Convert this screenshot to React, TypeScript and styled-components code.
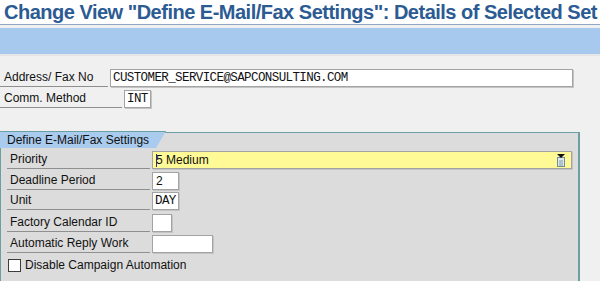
import React from 'react';
import styled, { createGlobalStyle } from 'styled-components';

const GlobalStyle = createGlobalStyle`
  body {
    margin: 0;
    background: #f0f0f0;
    font-family: 'Liberation Sans', Arial, sans-serif;
    overflow: hidden;
  }
`;

const Page = styled.div`
  width: 600px;
  height: 281px;
  background: #f0f0f0;
  overflow: hidden;
`;

const TitleBar = styled.div`
  height: 25px;
  background: #ffffff;
  border-bottom: 1px solid #8ea8c6;
  padding-left: 4px;
  box-sizing: border-box;
  white-space: nowrap;
  overflow: hidden;
`;

const Title = styled.h1`
  margin: 0;
  font-size: 20px;
  line-height: 24px;
  font-weight: bold;
  color: #2c5b93;
  letter-spacing: -0.5px;
`;

const Toolbar = styled.div`
  height: 26px;
  margin-top: 3px;
  background: #a7c9ee;
  border-bottom: 2px solid #e6e6e6;
`;

const Content = styled.div`
  padding: 12px 0 0 0;
`;

const Row = styled.div<{ $gap?: number }>`
  display: flex;
  align-items: flex-start;
  height: 20px;
  margin-bottom: ${(p) => p.$gap ?? 0}px;
`;

const Label = styled.div<{ $width: number; $indent: number }>`
  width: ${(p) => p.$width}px;
  margin-left: ${(p) => p.$indent}px;
  height: 19px;
  line-height: 18px;
  padding-left: ${(p) => (p.$indent > 0 ? 3 : 4)}px;
  box-sizing: border-box;
  border-bottom: 1px solid #8f8f8f;
  font-size: 12px;
  color: #111;
  white-space: nowrap;
  overflow: hidden;
`;

const Field = styled.div<{ $width: number; $left: number; $tone?: 'yellow' | 'white'; $mono?: boolean }>`
  position: relative;
  width: ${(p) => p.$width}px;
  height: 18px;
  margin-left: ${(p) => p.$left}px;
  margin-top: 1px;
  box-sizing: border-box;
  background: ${(p) => (p.$tone === 'yellow' ? '#fffa96' : '#ffffff')};
  border: 1px solid #a3a3a3;
  box-shadow: 1px 1px 0 #c4c4c4;
  padding-left: ${(p) => (p.$mono ? 2 : 3)}px;
  font-family: ${(p) =>
    p.$mono ? "'Liberation Mono', 'DejaVu Sans Mono', monospace" : "'Liberation Sans', Arial, sans-serif"};
  font-size: ${(p) => (p.$mono ? '12.5px' : '12px')};
  letter-spacing: ${(p) => (p.$mono ? '-0.6px' : '0')};
  line-height: 16px;
  color: #111;
  white-space: nowrap;
  overflow: hidden;
`;

const Caret = styled.span`
  position: absolute;
  left: 3px;
  top: 2px;
  width: 1px;
  height: 13px;
  background: #2a2a8a;
`;

const HelpIcon = styled.svg`
  position: absolute;
  right: 5px;
  top: 2px;
`;

const Group = styled.div`
  margin-top: 23px;
  width: 580px;
  height: 160px;
  box-sizing: border-box;
  background: #dcdcdc;
  border: 1px solid #6a9fa3;
  border-bottom: none;
  border-right-width: 2px;
  position: relative;
`;

const Tab = styled.div`
  width: 166px;
  height: 17px;
  margin: -2px 0 0 -1px;
  padding-left: 7px;
  box-sizing: border-box;
  background: #a9cbee;
  border-top: 1px solid #6a9fa3;
  clip-path: polygon(0 0, 100% 0, 94% 100%, 0 100%);
  font-size: 12px;
  line-height: 16px;
  color: #111;
  white-space: nowrap;
`;

const GroupBody = styled.div`
  padding-top: 2px;
`;

const CheckRow = styled.label`
  display: flex;
  align-items: center;
  gap: 4px;
  margin: 4px 0 0 7px;
  font-size: 12px;
  color: #111;
`;

const CheckBox = styled.span`
  width: 13px;
  height: 13px;
  box-sizing: border-box;
  background: #fff;
  border: 1px solid #3c3c3c;
`;

type GroupField = {
  label: string;
  value: string;
  width: number;
  mono?: boolean;
  gap?: number;
};

const groupFields: GroupField[] = [
  { label: 'Deadline Period', value: '2', width: 27 },
  { label: 'Unit', value: 'DAY', width: 27, mono: true, gap: 2 },
  { label: 'Factory Calendar ID', value: '', width: 20, gap: 1 },
  { label: 'Automatic Reply Work', value: '', width: 61 },
];

export default function App() {
  return (
    <Page>
      <GlobalStyle />
      <TitleBar>
        <Title>Change View "Define E-Mail/Fax Settings": Details of Selected Set</Title>
      </TitleBar>
      <Toolbar />
      <Content>
        <Row $gap={1}>
          <Label $width={108} $indent={0}>Address/ Fax No</Label>
          <Field $width={463} $left={2} $mono>
            CUSTOMER_SERVICE@SAPCONSULTING.COM
          </Field>
        </Row>
        <Row>
          <Label $width={122} $indent={0}>Comm. Method</Label>
          <Field $width={27} $left={2} $mono>
            INT
          </Field>
        </Row>

        <Group>
          <Tab>Define E-Mail/Fax Settings</Tab>
          <GroupBody>
            <Row $gap={1}>
              <Label $width={143} $indent={6}>Priority</Label>
              <Field $width={420} $left={2} $tone="yellow">
                <Caret />5 Medium
                <HelpIcon width="10" height="13" viewBox="0 0 10 13">
                  <rect x="1.5" y="3.5" width="7" height="9" fill="#dfe9ee" stroke="#6f8c99" />
                  <line x1="3" y1="7" x2="7" y2="7" stroke="#7f98a4" />
                  <line x1="3" y1="9" x2="7" y2="9" stroke="#7f98a4" />
                  <line x1="3" y1="11" x2="7" y2="11" stroke="#7f98a4" />
                  <polygon points="1,0 9,0 5,4" fill="#111" />
                </HelpIcon>
              </Field>
            </Row>
            {groupFields.map((f) => (
              <Row key={f.label} $gap={f.gap}>
                <Label $width={143} $indent={6}>{f.label}</Label>
                <Field $width={f.width} $left={2} $mono={f.mono}>
                  {f.value}
                </Field>
              </Row>
            ))}
            <CheckRow>
              <CheckBox />
              Disable Campaign Automation
            </CheckRow>
          </GroupBody>
        </Group>
      </Content>
    </Page>
  );
}
